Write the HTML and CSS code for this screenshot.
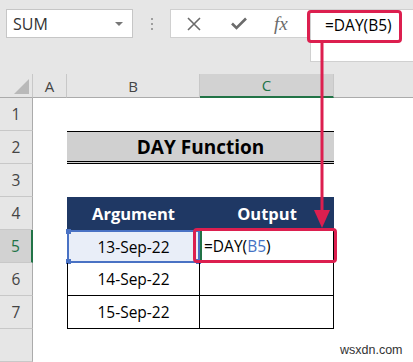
FILE: index.html
```html
<!DOCTYPE html>
<html>

<head>
	<meta charset="utf-8">
	<title>DAY Function</title>
	<link rel="stylesheet" href="styles.css">
</head>

<body>
	<div id="app">
		<div class="ribbon">
			<div class="namebox">
				<span>SUM</span>
				<span class="caret"></span>
			</div>
			<div class="grip">
				<i></i><i></i><i></i>
			</div>
			<div class="fbtns">
				<svg class="ic-x" width="14" height="14" viewBox="0 0 14 14">
					<path d="M1 1 L13 13 M13 1 L1 13" stroke="#6b6b6b" stroke-width="1.6" fill="none" />
				</svg>
				<svg class="ic-ok" width="16" height="13" viewBox="0 0 16 13">
					<path d="M1 6.5 L5.5 11 L15 1.5" stroke="#6b6b6b" stroke-width="2.6" fill="none" />
				</svg>
				<span class="fx">fx</span>
			</div>
			<div class="fbox">
				<span class="ftext">=DAY(B5)</span>
			</div>
		</div>

		<div class="sheet">
			<!-- column headers -->
			<div class="corner"><span></span></div>
			<div class="colhead">A</div>
			<div class="colhead">B</div>
			<div class="colhead active">C</div>
			<div class="colhead blank"></div>

			<!-- row 1 -->
			<div class="rowhead">1</div>
			<div class="cell"></div>
			<div class="cell"></div>
			<div class="cell"></div>
			<div class="cell"></div>

			<!-- row 2 -->
			<div class="rowhead">2</div>
			<div class="cell"></div>
			<div class="cell title">DAY Function</div>
			<div class="cell"></div>

			<!-- row 3 -->
			<div class="rowhead">3</div>
			<div class="cell"></div>
			<div class="cell"></div>
			<div class="cell"></div>
			<div class="cell"></div>

			<!-- row 4 -->
			<div class="rowhead">4</div>
			<div class="cell"></div>
			<div class="cell th th-b">Argument</div>
			<div class="cell th th-c">Output</div>
			<div class="cell"></div>

			<!-- row 5 -->
			<div class="rowhead active">5</div>
			<div class="cell"></div>
			<div class="cell td-b ref">13-Sep-22
				<span class="handle tl"></span>
				<span class="handle bl"></span>
				<span class="handle br"></span>
			</div>
			<div class="cell td-c current">=DAY(<span class="refc">B5</span>)</div>
			<div class="cell"></div>

			<!-- row 6 -->
			<div class="rowhead">6</div>
			<div class="cell"></div>
			<div class="cell td-b">14-Sep-22</div>
			<div class="cell td-c"></div>
			<div class="cell"></div>

			<!-- row 7 -->
			<div class="rowhead">7</div>
			<div class="cell"></div>
			<div class="cell td-b">15-Sep-22</div>
			<div class="cell td-c"></div>
			<div class="cell"></div>

			<!-- row 8 -->
			<div class="rowhead"></div>
			<div class="cell"></div>
			<div class="cell"></div>
			<div class="cell"></div>
			<div class="cell"></div>
		</div>

		<!-- annotations -->
		<div class="mark mark-bar"></div>
		<div class="mark mark-cell"></div>
		<svg class="arrow" width="20" height="190" viewBox="0 0 20 190">
			<path d="M10 0 L10 172" stroke="#dc1f4f" stroke-width="3" fill="none" />
			<path d="M2 168 L10 186 L18 168 Z" fill="#dc1f4f" />
		</svg>
		<div class="watermark">wsxdn.com</div>
	</div>
</body>

</html>
```

FILE: styles.css
```css
html,
body {
	margin: 0;
	padding: 0;
}

body {
	font-family: "Open Sans", "Liberation Sans", sans-serif;
	color: #000;
	background-color: #fff;
}

#app {
	position: relative;
	width: 413px;
	height: 362px;
	overflow: hidden;
}

.ribbon {
	height: 74px;
	background-color: #e6e6e6;
	display: flex;
	align-items: flex-start;
	padding: 9px 0 0 6px;
	box-sizing: border-box;
}

.namebox {
	width: 127px;
	height: 29px;
	box-sizing: border-box;
	border: 1px solid #c6c6c6;
	background-color: #fff;
	display: flex;
	align-items: center;
	justify-content: space-between;
	padding: 0 9px 0 6px;
	font-size: 16px;
	color: #333;
}

.caret {
	width: 0;
	height: 0;
	border-left: 4px solid transparent;
	border-right: 4px solid transparent;
	border-top: 4px solid #777;
}

.grip {
	width: 37px;
	height: 29px;
	display: flex;
	flex-direction: column;
	align-items: center;
	justify-content: center;
	gap: 3px;
}

.grip i {
	display: block;
	width: 2px;
	height: 2px;
	background-color: #9e9e9e;
}

.fbtns {
	width: 140px;
	height: 29px;
	box-sizing: border-box;
	border: 1px solid #d0d0d0;
	border-right: none;
	background-color: #fff;
	display: flex;
	align-items: center;
	padding-left: 16px;
}

.ic-ok {
	margin-left: 30px;
}

.fx {
	margin-left: 27px;
	font-family: "Liberation Serif", serif;
	font-style: italic;
	font-size: 19px;
	color: #6b6b6b;
	line-height: 1;
}

.fbox {
	flex: 1;
	height: 53px;
	box-sizing: border-box;
	border: 1px solid #d0d0d0;
	border-right: none;
	background-color: #fff;
	padding: 4px 0 0 14px;
	font-size: 15.5px;
}

.sheet {
	display: grid;
	grid-template-columns: 33px 34px 133px 134px 1fr;
	grid-template-rows: 24px repeat(8, 33px);
}

.corner {
	background-color: #e6e6e6;
	border-right: 1px solid #c8c8c8;
	border-bottom: 1px solid #ababab;
	box-sizing: border-box;
	position: relative;
}

.corner span {
	position: absolute;
	right: 3px;
	bottom: 3px;
	width: 0;
	height: 0;
	border-left: 15px solid transparent;
	border-bottom: 15px solid #b9b9b9;
}

.colhead {
	background-color: #e6e6e6;
	border-right: 1px solid #c8c8c8;
	border-bottom: 1px solid #ababab;
	box-sizing: border-box;
	display: flex;
	align-items: center;
	justify-content: center;
	font-size: 15px;
	color: #444;
}

.colhead.active {
	background-color: #d2d2d2;
	border-bottom: 2px solid #217346;
	color: #217346;
}

.colhead.blank {
	border-right: none;
}

.rowhead {
	background-color: #e6e6e6;
	border-right: 1px solid #ababab;
	border-bottom: 1px solid #c8c8c8;
	box-sizing: border-box;
	display: flex;
	align-items: center;
	justify-content: center;
	font-size: 15.5px;
	color: #444;
}

.rowhead.active {
	background-color: #d2d2d2;
	border-right: 2px solid #217346;
	color: #217346;
}

.cell {
	box-sizing: border-box;
	font-size: 15.5px;
	display: flex;
	align-items: center;
	justify-content: center;
	position: relative;
}

.title {
	grid-column: span 2;
	background-color: #d0d0d0;
	border-top: 1px solid #000;
	border-bottom: 3px double #000;
	font-weight: bold;
	font-size: 19px;
}

.th {
	background-color: #1f3864;
	color: #fff;
	font-weight: bold;
	font-size: 16.5px;
}

.td-b {
	border-left: 1px solid #000;
	border-right: 1px solid #000;
	border-bottom: 1px solid #000;
}

.td-c {
	border-right: 1px solid #000;
	border-bottom: 1px solid #000;
}

.ref {
	background-color: #e9eef8;
	border: 2px solid #4a72c4;
}

.handle {
	position: absolute;
	width: 5px;
	height: 5px;
	background-color: #4a72c4;
}

.handle.tl {
	left: -3px;
	top: -3px;
}

.handle.bl {
	left: -3px;
	bottom: -3px;
}

.handle.br {
	right: -3px;
	bottom: -3px;
}

.current {
	justify-content: flex-start;
	padding-left: 2px;
	border-left: 2px solid #217346;
	border-bottom: 2px solid #217346;
}

.refc {
	color: #4472c4;
}

.mark {
	position: absolute;
	box-sizing: border-box;
	border: 3px solid #dc1f4f;
	border-radius: 4px;
}

.mark-bar {
	left: 307px;
	top: 10px;
	width: 95px;
	height: 33px;
}

.mark-cell {
	left: 193px;
	top: 228px;
	width: 144px;
	height: 35px;
}

.arrow {
	position: absolute;
	left: 312px;
	top: 42px;
}

.watermark {
	position: absolute;
	left: 340px;
	top: 343px;
	font-family: "Liberation Sans", sans-serif;
	font-size: 12.5px;
	color: #333;
}
```
